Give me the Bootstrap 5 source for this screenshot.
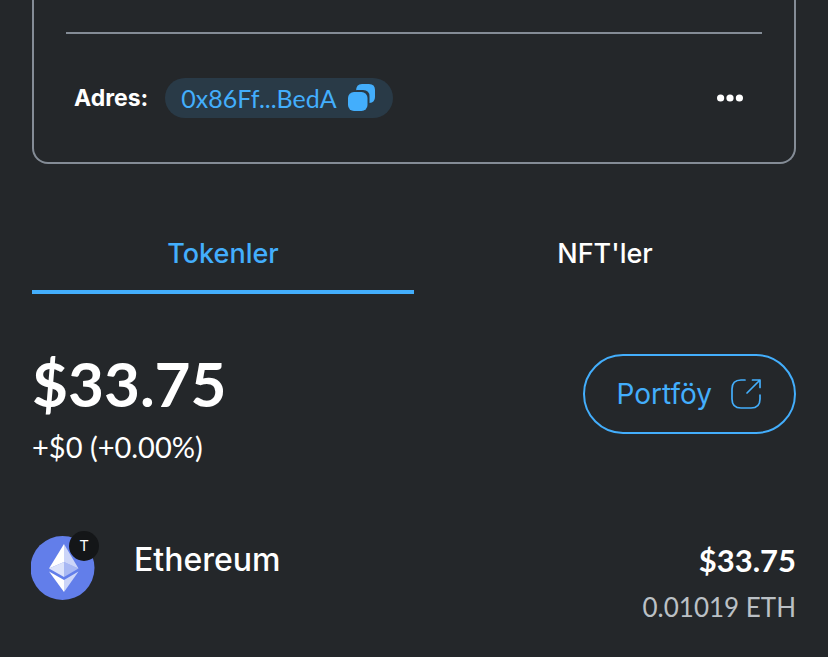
<!DOCTYPE html>
<html lang="tr" data-bs-theme="dark">
<head>
<meta charset="utf-8">
<meta name="viewport" content="width=device-width, initial-scale=1">
<title>Cüzdan</title>
<link href="https://cdn.jsdelivr.net/npm/bootstrap@5.3.0/dist/css/bootstrap.min.css" rel="stylesheet">
<style>
  body { background: #24272a; color: #fff; font-family: Lato, "Open Sans", sans-serif; font-size: 28px; line-height: 40px; }
  .wallet { padding: 0 32px 16px; }
  .account { border: 2px solid #848c96; border-top: 0; border-radius: 0 0 16px 16px; padding: 32px 32px 44px; }
  .divider { border-top: 2px solid #848c96; opacity: 1; margin: 0 0 44px; }
  .address-row { padding: 0 18px 0 8px; gap: 17px; }
  .address-label, .wallet-tabs, .portfolio, .token-name { font-family: Inter, Lato, sans-serif; }
  .address-label { font-size: 23px; }
  .address-pill { background: #293a47; color: #43aefc; height: 40px; padding: 0 16px; gap: 10px; border: 0; font-size: 25px; line-height: 40px; }
  .menu-btn { border: 0; background: none; padding: 0; line-height: 0; }
  .wallet-tabs { margin-top: 64px; }
  .wallet-tabs .nav-link { color: #fff; border: 0; border-bottom: 4px solid transparent; border-radius: 0; padding: 6px 0 16px; font-size: 27px; font-weight: 500; background: none; }
  .wallet-tabs .nav-link.active { color: #43aefc; border-color: #43aefc; background: none; }
  .balance { margin-top: 60px; }
  .total { font-size: 62px; line-height: 58px; font-weight: 700; }
  .change { margin-top: 15px; font-size: 29px; }
  .portfolio { border: 2px solid #43aefc; color: #43aefc; height: 80px; padding: 0 32px; gap: 18px; font-size: 28px; }
  .portfolio:hover { color: #43aefc; border-color: #43aefc; }
  .token { margin-top: 63px; gap: 32px; }
  .token-name, .token-value { line-height: 48px; padding-top: 6px; }
  .token-name { font-size: 32px; font-weight: 500; padding-left: 1px; }
  .token-value { font-size: 31px; font-weight: 700; }
  .token-amount { color: #bbc0c5; font-size: 26px; line-height: 46px; }
  .token-icon { margin-left: -1px; }
</style>
<script src="https://cdn.jsdelivr.net/npm/bootstrap@5.3.0/dist/js/bootstrap.bundle.min.js" defer></script>
</head>
<body>
<main class="wallet">
  <section class="account">
    <hr class="divider">
    <div class="address-row d-flex align-items-center">
      <span class="address-label fw-bold">Adres:</span>
      <button type="button" class="address-pill rounded-pill d-flex align-items-center">
        0x86Ff...BedA
        <svg width="30" height="30" viewBox="0 0 30 30" fill="#43aefc" aria-hidden="true">
          <path d="M9 8.200Q9 1 15 1H22Q28 1 28 7V14Q28 19.500 22.500 20V13.500Q22.500 7 16 7H9Z"/>
          <rect x="1" y="9" width="19.500" height="19" rx="6"/>
        </svg>
      </button>
      <button type="button" class="menu-btn ms-auto" aria-label="Seçenekler">
        <svg width="28" height="8" viewBox="0 0 28 8" fill="#fff"><circle cx="4.600" cy="4" r="3.600"/><circle cx="14" cy="4" r="3.600"/><circle cx="23.400" cy="4" r="3.600"/></svg>
      </button>
    </div>
  </section>

  <ul class="wallet-tabs nav nav-fill" role="tablist">
    <li class="nav-item w-50" role="presentation"><button type="button" class="nav-link active w-100" role="tab" aria-selected="true">Tokenler</button></li>
    <li class="nav-item w-50" role="presentation"><button type="button" class="nav-link w-100" role="tab" aria-selected="false">NFT'ler</button></li>
  </ul>

  <section class="balance d-flex justify-content-between align-items-start">
    <div>
      <div class="total">$33.75</div>
      <div class="change">+$0 (+0.00%)</div>
    </div>
    <a href="#" class="portfolio btn rounded-pill d-flex align-items-center">
      Portföy
      <svg width="32" height="32" viewBox="0 0 32 32" fill="none" stroke="#43aefc" stroke-width="1.700" stroke-linecap="round" stroke-linejoin="round" aria-hidden="true">
        <path d="M15 2H11Q2 2 2 11V21Q2 30 11 30H21Q30 30 30 21V17"/>
        <path d="M17 15L30 2M22.500 2H30V9.500"/>
      </svg>
    </a>
  </section>

  <section class="token d-flex align-items-start">
    <svg class="token-icon flex-shrink-0" width="70" height="72" viewBox="0 0 70 72" role="img" aria-label="Ethereum">
      <circle cx="31.500" cy="38" r="32" fill="#627eea"/>
      <g fill="#fff">
        <path d="M33 14V32L47.500 38.500Z" opacity=".68"/>
        <path d="M33 14L18 38.500L33 32Z"/>
        <path d="M33 47V32L18 38.500Z" opacity=".78"/>
        <path d="M33 47V32L47.500 38.500Z" opacity=".45"/>
        <path d="M18 41.500L33 50V62Z"/>
        <path d="M33 50L47.500 41.500L33 62Z" opacity=".68"/>
      </g>
      <circle cx="53" cy="16" r="15" fill="#141618"/>
      <text x="53" y="21" fill="#fff" font-family="Inter, sans-serif" font-size="15" text-anchor="middle">T</text>
    </svg>
    <div class="token-name">Ethereum</div>
    <div class="ms-auto text-end">
      <div class="token-value">$33.75</div>
      <div class="token-amount">0.01019 ETH</div>
    </div>
  </section>
</main>
</body>
</html>
